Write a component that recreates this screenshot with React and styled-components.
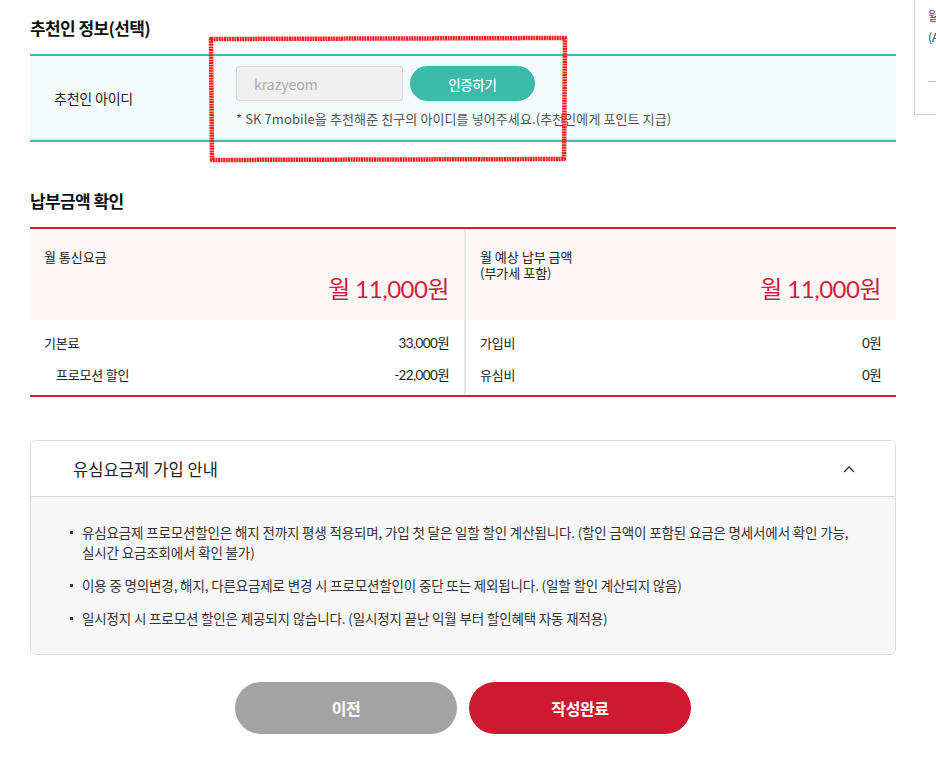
import React from "react";
import styled, { createGlobalStyle } from "styled-components";

const Global = createGlobalStyle`
  html, body { margin: 0; padding: 0; background: #fff; }
  body { font-family: "Noto Sans CJK KR", "Noto Sans", sans-serif; color: #222; overflow: hidden; }
  * { box-sizing: border-box; }
`;

const Page = styled.div`
  position: relative;
  width: 936px;
  height: 777px;
  overflow: hidden;
`;

const Main = styled.div`
  width: 866px;
  margin-left: 30px;
  padding-top: 16px;
`;

const SectionTitle = styled.h2`
  margin: 0 0 ${(p) => p.$gap || 14}px;
  font-size: 17px;
  line-height: 24px;
  font-weight: 700;
  letter-spacing: -0.6px;
  color: #111;
`;

const RefTable = styled.div`
  display: grid;
  grid-template-columns: 206px 1fr;
  background: #f4f9f9;
  border-top: 2px solid #47b9aa;
  border-bottom: 2px solid #47b9aa;
  box-shadow: inset 0 -2px 0 #e3e9e8;
  height: 88px;
`;

const RefLabel = styled.div`
  display: flex;
  align-items: center;
  padding-left: 24px;
  font-size: 14px;
  letter-spacing: -0.2px;
  color: #222;
`;

const RefField = styled.div`
  padding-top: 10px;
  display: flex;
  flex-direction: column;
`;

const InputRow = styled.div`
  display: flex;
  gap: 7px;
  align-items: center;
`;

const Input = styled.input`
  width: 167px;
  height: 35px;
  background: #efefef;
  border: 1px solid #d6d6d6;
  border-radius: 3px;
  padding: 0 17px;
  font-family: "Noto Sans CJK KR", "Noto Sans", sans-serif;
  font-size: 14px;
  color: #aaa;
  outline: none;
  &::placeholder { color: #aaa; }
`;

const TealButton = styled.button`
  width: 125px;
  height: 35px;
  border: none;
  border-radius: 18px;
  background: #3dbaa9;
  color: #fff;
  font-family: "Noto Sans CJK KR", sans-serif;
  font-size: 13.5px;
  font-weight: 500;
  letter-spacing: -0.3px;
`;

const Helper = styled.p`
  margin: 8px 0 0;
  font-size: 13px;
  line-height: 20px;
  letter-spacing: 0.1px;
  color: #555;
`;

const Spacer = styled.div`
  height: ${(p) => p.$h}px;
`;

const PayTable = styled.div`
  display: grid;
  grid-template-columns: 434px 1fr;
  border-top: 2px solid #d41d3c;
  border-bottom: 2px solid #d41d3c;
`;

const PayCol = styled.div`
  border-left: ${(p) => (p.$divider ? "2px solid #e8e8e8" : "none")};
  display: flex;
  flex-direction: column;
`;

const PayHead = styled.div`
  background: #fdf7f8;
  height: 91px;
  padding: 20px 15px 0 14px;
  display: flex;
  flex-direction: column;
`;

const PayLabel = styled.div`
  font-size: 13px;
  line-height: 16px;
  letter-spacing: 0;
  color: #222;
`;

const Amount = styled.div`
  margin-top: ${(p) => p.$mt}px;
  text-align: right;
  font-family: Lato, "Noto Sans CJK KR", sans-serif;
  font-size: 24px;
  line-height: 30px;
  color: #d41d3c;
  letter-spacing: -0.5px;
`;

const PayRows = styled.div`
  padding: 6px 15px 5px 14px;
  display: flex;
  flex-direction: column;
`;

const PayRow = styled.div`
  display: flex;
  justify-content: space-between;
  align-items: center;
  height: 32px;
  padding-left: ${(p) => (p.$indent ? 12 : 0)}px;
  font-size: 13px;
  letter-spacing: -0.2px;
  color: #222;
`;

const Num = styled.span`
  font-family: Lato, "Noto Sans CJK KR", sans-serif;
  font-size: 13.5px;
  letter-spacing: -0.6px;
`;

const Accordion = styled.div`
  border: 1px solid #dcdcdc;
  border-radius: 6px;
  overflow: hidden;
`;

const AccHead = styled.div`
  height: 56px;
  display: flex;
  align-items: center;
  justify-content: space-between;
  padding: 0 40px 0 42px;
  border-bottom: 1px solid #d9d9d9;
  background: #fff;
`;

const AccTitle = styled.span`
  font-size: 16.5px;
  letter-spacing: 0.1px;
  color: #222;
`;

const AccBody = styled.ul`
  margin: 0;
  list-style: none;
  background: #f7f7f7;
  padding: 25px 24px 26px 39px;
  display: flex;
  flex-direction: column;
  gap: 13px;
`;

const Bullet = styled.li`
  position: relative;
  padding-left: 12px;
  font-size: 13.5px;
  line-height: 20px;
  letter-spacing: -0.15px;
  word-break: keep-all;
  color: #333;
  &::before {
    content: "";
    position: absolute;
    left: 0;
    top: 9px;
    width: 3px;
    height: 3px;
    background: #333;
  }
`;

const ButtonRow = styled.div`
  display: flex;
  justify-content: center;
  gap: 12px;
  margin-top: 27px;
`;

const BigButton = styled.button`
  width: 222px;
  height: 52px;
  border: none;
  border-radius: 26px;
  background: ${(p) => (p.$primary ? "#cf1932" : "#a3a3a3")};
  color: #fff;
  font-family: "Noto Sans CJK KR", sans-serif;
  font-size: 16px;
  font-weight: 700;
  letter-spacing: -0.4px;
`;

const Annotation = styled.svg`
  position: absolute;
  left: 207px;
  top: 35px;
  width: 362px;
  height: 128px;
  pointer-events: none;
`;

const SidePanel = styled.div`
  position: absolute;
  left: 914px;
  top: -4px;
  width: 120px;
  height: 119px;
  border: 1px solid #cfcfcf;
  background: #fff;
  padding: 8px 0 0 13px;
  font-size: 12px;
  line-height: 21px;
  color: #444;
`;

const SideLine = styled.div`
  margin-top: 34px;
  width: 60px;
  border-top: 1px solid #bbb;
`;

export default function App() {
  return (
    <Page>
      <Global />
      <Main>
        <SectionTitle>추천인 정보(선택)</SectionTitle>
        <RefTable>
          <RefLabel>추천인 아이디</RefLabel>
          <RefField>
            <InputRow>
              <Input placeholder="krazyeom" />
              <TealButton>인증하기</TealButton>
            </InputRow>
            <Helper>* SK 7mobile을 추천해준 친구의 아이디를 넣어주세요.(추천인에게 포인트 지급)</Helper>
          </RefField>
        </RefTable>

        <Spacer $h={47} />
        <SectionTitle $gap={14}>납부금액 확인</SectionTitle>
        <PayTable>
          <PayCol>
            <PayHead>
              <PayLabel>월 통신요금</PayLabel>
              <Amount $mt={9}>월 11,000원</Amount>
            </PayHead>
            <PayRows>
              <PayRow><span>기본료</span><Num>33,000원</Num></PayRow>
              <PayRow $indent><span>프로모션 할인</span><Num>-22,000원</Num></PayRow>
            </PayRows>
          </PayCol>
          <PayCol $divider>
            <PayHead>
              <PayLabel>월 예상 납부 금액</PayLabel>
              <PayLabel>(부가세 포함)</PayLabel>
              <Amount $mt={-7}>월 11,000원</Amount>
            </PayHead>
            <PayRows>
              <PayRow><span>가입비</span><Num>0원</Num></PayRow>
              <PayRow><span>유심비</span><Num>0원</Num></PayRow>
            </PayRows>
          </PayCol>
        </PayTable>

        <Spacer $h={43} />
        <Accordion>
          <AccHead>
            <AccTitle>유심요금제 가입 안내</AccTitle>
            <svg width="12" height="8" viewBox="0 0 12 8">
              <path d="M1 7 L6 2 L11 7" fill="none" stroke="#333" strokeWidth="1.4" />
            </svg>
          </AccHead>
          <AccBody>
            <Bullet>유심요금제 프로모션할인은 해지 전까지 평생 적용되며, 가입 첫 달은 일할 할인 계산됩니다. (할인 금액이 포함된 요금은 명세서에서 확인 가능, 실시간 요금조회에서 확인 불가)</Bullet>
            <Bullet>이용 중 명의변경, 해지, 다른요금제로 변경 시 프로모션할인이 중단 또는 제외됩니다. (일할 할인 계산되지 않음)</Bullet>
            <Bullet>일시정지 시 프로모션 할인은 제공되지 않습니다. (일시정지 끝난 익월 부터 할인혜택 자동 재적용)</Bullet>
          </AccBody>
        </Accordion>

        <ButtonRow>
          <BigButton>이전</BigButton>
          <BigButton $primary>작성완료</BigButton>
        </ButtonRow>
      </Main>

      <Annotation viewBox="0 0 362 128">
        <path
          d="M4 4 L358 3 L357 124 L5 125 Z"
          fill="none"
          stroke="#f21d1d"
          strokeWidth="4.5"
          strokeDasharray="2 0.6"
          strokeLinejoin="round"
        />
      </Annotation>

      <SidePanel>
        <div>월</div>
        <div>(A</div>
        <SideLine />
      </SidePanel>
    </Page>
  );
}
